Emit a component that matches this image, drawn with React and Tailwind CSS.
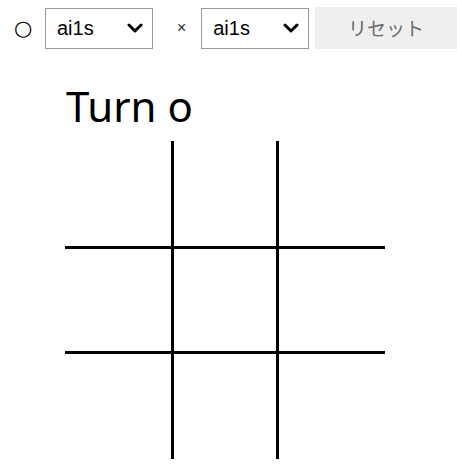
import React, { useState } from 'react'

const players = ['ai1s', 'human', 'ai2']

function Chevron() {
  return (
    <svg width="16" height="10" viewBox="0 0 16 10" className="pointer-events-none absolute right-[10px] top-1/2 -translate-y-1/2">
      <path d="M2 2 L8 8 L14 2" fill="none" stroke="black" strokeWidth="3" strokeLinecap="round" strokeLinejoin="round" />
    </svg>
  )
}

function PlayerSelect({ value, onChange }) {
  return (
    <div className="relative w-[108px] h-[41px]">
      <select
        value={value}
        onChange={e => onChange(e.target.value)}
        className="appearance-none w-full h-full border border-[#9a9a9a] bg-white pl-[11px] text-[20px] text-black outline-none"
        style={{ fontFamily: '"Liberation Sans", Arial, sans-serif' }}
      >
        {players.map(p => <option key={p} value={p}>{p}</option>)}
      </select>
      <Chevron />
    </div>
  )
}

export default function App() {
  const [o, setO] = useState('ai1s')
  const [x, setX] = useState('ai1s')
  const [board, setBoard] = useState(Array(9).fill(''))

  const cellBorder = i => {
    const col = i % 3
    const row = Math.floor(i / 3)
    return [
      col < 2 ? 'border-r-[3px]' : '',
      row < 2 ? 'border-b-[3px]' : '',
    ].join(' ')
  }

  const colW = ['w-[109px]', 'w-[105px]', 'w-[106px]']
  const rowH = ['h-[108px]', 'h-[105px]', 'h-[105px]']

  return (
    <div className="min-h-screen bg-white text-black" style={{ fontFamily: '"Liberation Sans", Arial, sans-serif' }}>
      <div className="flex items-center pt-[7px] pl-[14px]">
        <span className="text-[21px] leading-none w-[18px] mr-[13px]" style={{ fontFamily: '"DejaVu Sans", sans-serif' }}>○</span>
        <PlayerSelect value={o} onChange={setO} />
        <span className="text-[16px] ml-[24px] mr-[15px] leading-none text-[#333]">×</span>
        <PlayerSelect value={x} onChange={setX} />
        <button
          onClick={() => setBoard(Array(9).fill(''))}
          className="ml-[6px] w-[142px] h-[42px] bg-[#efefef] text-[19px] text-[#6b6b6b]"
          style={{ fontFamily: '"Noto Sans CJK JP", sans-serif' }}
        >
          リセット
        </button>
      </div>

      <div className="ml-[65px]">
        <h1 className="text-[42px] leading-none mt-[36px] mb-[14px] ml-[1px]" style={{ fontFamily: '"Noto Sans", sans-serif' }}>
          Turn o
        </h1>
        <div className="flex flex-col">
          {[0, 1, 2].map(r => (
            <div key={r} className="flex">
              {[0, 1, 2].map(c => {
                const i = r * 3 + c
                return (
                  <div
                    key={c}
                    className={`${colW[c]} ${rowH[r]} border-black ${cellBorder(i)} flex items-center justify-center text-[60px]`}
                  >
                    {board[i]}
                  </div>
                )
              })}
            </div>
          ))}
        </div>
      </div>
    </div>
  )
}
